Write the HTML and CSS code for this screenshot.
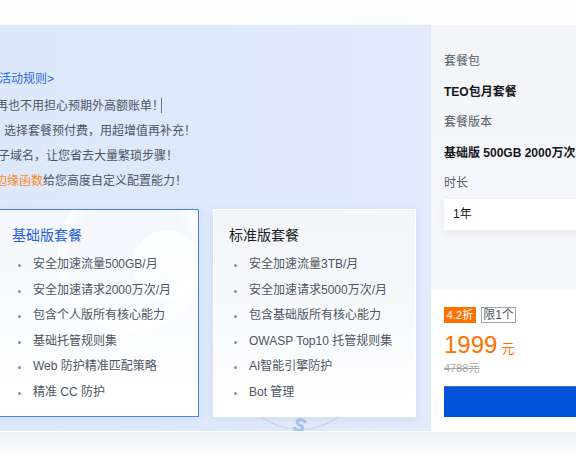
FILE: index.html
```html
<!DOCTYPE html>
<html lang="zh-CN">
<head>
<meta charset="utf-8">
<title>TEO 套餐</title>
<link rel="stylesheet" href="styles.css">
</head>
<body>
<div class="topbar"></div>
<div class="main">
  <section class="promo">
    <div class="deco-ring"></div>
    <svg class="deco-s" width="16" height="16" viewBox="0 0 16 16" aria-hidden="true">
      <path d="M12 3.5 C9 1.5 4 2.5 4.5 6 C5 9 11.5 7.5 11.5 11 C11.5 14 6 14.5 3.5 12.5" fill="none" stroke="#a6c4f2" stroke-width="3.2" stroke-linecap="round"/>
    </svg>
    <div class="intro">
      <div class="line link-line l1"><a class="rule-link">活动规则&gt;</a></div>
      <div class="line l2">再也不用担心预期外高额账单！<span class="caret"></span></div>
      <div class="line l3">，选择套餐预付费，用超增值再补充！</div>
      <div class="line l4">子域名，让您省去大量繁琐步骤！</div>
      <div class="line l5"><span class="hl">边缘函数</span>给您高度自定义配置能力！</div>
    </div>
    <div class="cards">
      <div class="card card-active">
        <div class="card-circle c1"></div>
        <div class="card-circle c2"></div>
        <h3 class="card-title">基础版套餐</h3>
        <ul class="feat">
          <li>安全加速流量500GB/月</li>
          <li>安全加速请求2000万次/月</li>
          <li>包含个人版所有核心能力</li>
          <li>基础托管规则集</li>
          <li>Web 防护精准匹配策略</li>
          <li>精准 CC 防护</li>
        </ul>
      </div>
      <div class="card card-plain">
        <h3 class="card-title">标准版套餐</h3>
        <ul class="feat">
          <li>安全加速流量3TB/月</li>
          <li>安全加速请求5000万次/月</li>
          <li>包含基础版所有核心能力</li>
          <li>OWASP Top10 托管规则集</li>
          <li>AI智能引擎防护</li>
          <li>Bot 管理</li>
        </ul>
      </div>
    </div>
  </section>
  <aside class="order">
    <div class="config">
      <div class="row label">套餐包</div>
      <div class="row value">TEO包月套餐</div>
      <div class="row label">套餐版本</div>
      <div class="row value">基础版 500GB 2000万次/月</div>
      <div class="row label">时长</div>
      <div class="select">1年</div>
    </div>
    <div class="buy">
      <div class="tags">
        <span class="tag tag-off">4.2折</span>
        <span class="tag tag-limit">限1个</span>
      </div>
      <div class="price"><span class="num">1999</span><span class="unit">元</span></div>
      <div class="orig">4788元</div>
      <div class="btn"></div>
    </div>
  </aside>
</div>
<div class="footer"></div>
</body>
</html>
```

FILE: styles.css
```css
* { box-sizing: border-box; }
html, body { margin: 0; padding: 0; }
body {
  width: 576px;
  height: 460px;
  overflow: hidden;
  background: #ffffff;
  font-family: "Liberation Sans", "Noto Sans CJK SC", sans-serif;
  font-size: 12px;
  color: #4e5969;
}
.topbar { height: 25px; background: #fdfdfe; }
.main { display: flex; height: 406px; }

/* left promo */
.promo {
  position: relative;
  width: 431px;
  flex: none;
  overflow: hidden;
  background: linear-gradient(90deg, #dde8fb 0%, #dfe9fb 70%, #e2ebfb 100%);
  padding-top: 42px;
}
.intro { position: relative; z-index: 1; }
.line { line-height: 25px; white-space: nowrap; color: #4e5563; }
.link-line { margin-bottom: 2px; }
.rule-link { color: #2a6be6; }
.l1 { margin-left: -1px; }
.l2 { margin-left: -4px; }
.l3 { margin-left: -8px; }
.l4 { margin-left: -2px; }
.l5 { margin-left: -5px; }
.hl { color: #ff8a1f; }
.caret {
  display: inline-block;
  width: 1px;
  height: 15px;
  background: #6b7280;
  vertical-align: -3px;
  margin-left: -3px;
}

.cards {
  position: relative;
  z-index: 1;
  display: flex;
  gap: 14px;
  margin-top: 15px;
  margin-left: -4px;
}
.card {
  position: relative;
  overflow: hidden;
  width: 203px;
  height: 208px;
  padding: 15px 0 0 15px;
  box-shadow: 0 2px 10px rgba(80, 110, 170, 0.10);
}
.card-active {
  border: 1px solid #4a84ef;
  background: linear-gradient(180deg, #f3f6fc 0%, #fbfcfe 55%, #ffffff 100%);
}
.card-plain {
  border: 1px solid #ffffff;
  background: linear-gradient(180deg, #f3f5f9 0%, #f9fafc 55%, #ffffff 100%);
}
.card-circle {
  position: absolute;
  border-radius: 50%;
  pointer-events: none;
}
.c1 {
  width: 150px; height: 150px;
  left: 60px; top: -30px;
  background: radial-gradient(circle, rgba(255,255,255,0) 55%, rgba(255,255,255,0.9) 70%, rgba(255,255,255,0) 72%);
}
.c2 {
  width: 70px; height: 70px;
  left: 135px; top: 20px;
  background: rgba(255,255,255,0.7);
}
.card-title {
  position: relative;
  margin: 0;
  font-size: 14px;
  font-weight: normal;
  line-height: 20px;
  color: #1d1f24;
}
.card-active .card-title { color: #1f5fdf; }
.feat {
  position: relative;
  list-style: none;
  margin: 7px 0 0;
  padding: 0;
}
.feat li {
  position: relative;
  line-height: 25.6px;
  padding-left: 21px;
  color: #4e5563;
  white-space: nowrap;
}
.feat li::before {
  content: "";
  position: absolute;
  left: 6px;
  top: 12px;
  width: 3px;
  height: 3px;
  border-radius: 50%;
  background: #8a909a;
}
.card-plain .feat li { padding-left: 20px; }
.card-plain .feat li::before { left: 5px; }

.deco-ring {
  position: absolute;
  left: 235px;
  top: 275px;
  width: 130px;
  height: 130px;
  border-radius: 50%;
  border: 1px solid #c9d4e6;
  background: radial-gradient(circle, #e9eff9 0%, #e1e9f8 80%);
  z-index: 0;
}
.deco-s {
  position: absolute;
  left: 292px;
  top: 392px;
  z-index: 0;
  transform: rotate(15deg);
}

/* right order panel */
.order {
  flex: 1;
  min-width: 0;
  overflow: hidden;
  display: flex;
  flex-direction: column;
  background: #f3f5f9;
}
.config {
  height: 265px;
  padding: 21px 0 0 13px;
  background: linear-gradient(180deg, #f3f5f9 0%, #f5f7fa 100%);
}
.row { line-height: 30.5px; white-space: nowrap; }
.label { color: #555b66; }
.value { color: #16181d; font-weight: bold; font-size: 12px; }
.select {
  width: 200px;
  height: 31px;
  line-height: 31px;
  padding-left: 9px;
  background: #ffffff;
  color: #16181d;
  box-shadow: 0 2px 8px rgba(60, 80, 120, 0.08);
}
.buy {
  flex: 1;
  background: #ffffff;
  padding: 17px 0 0 13px;
}
.tags { display: flex; gap: 5px; height: 16px; }
.tag {
  display: inline-block;
  height: 16px;
  line-height: 14px;
  font-size: 11px;
  white-space: nowrap;
  text-align: center;
  padding: 0;
}
.tag-off {
  width: 32px;
  background: #ff7200;
  color: #ffffff;
  border: 1px solid #ff7200;
}
.tag-limit {
  width: 35px;
  border: 1px solid #a0a4ab;
  color: #4e5563;
  font-size: 12px;
}
.price {
  margin-top: 8px;
  height: 28px;
  line-height: 28px;
  color: #ff7200;
  white-space: nowrap;
}
.num { font-size: 24px; }
.unit { font-size: 13px; margin-left: 4px; }
.orig {
  margin-top: 2px;
  line-height: 14px;
  font-size: 11px;
  color: #a3a8b1;
  text-decoration: line-through;
}
.btn {
  margin-top: 11px;
  width: 200px;
  height: 31px;
  background: #0052d9;
  border-top: 1px solid #3a78e0;
}

.footer {
  height: 29px;
  border-top: 1px solid #ffffff;
  background: linear-gradient(180deg, #eceff5 0%, #f7f8fb 50%, #ffffff 100%);
}
```
